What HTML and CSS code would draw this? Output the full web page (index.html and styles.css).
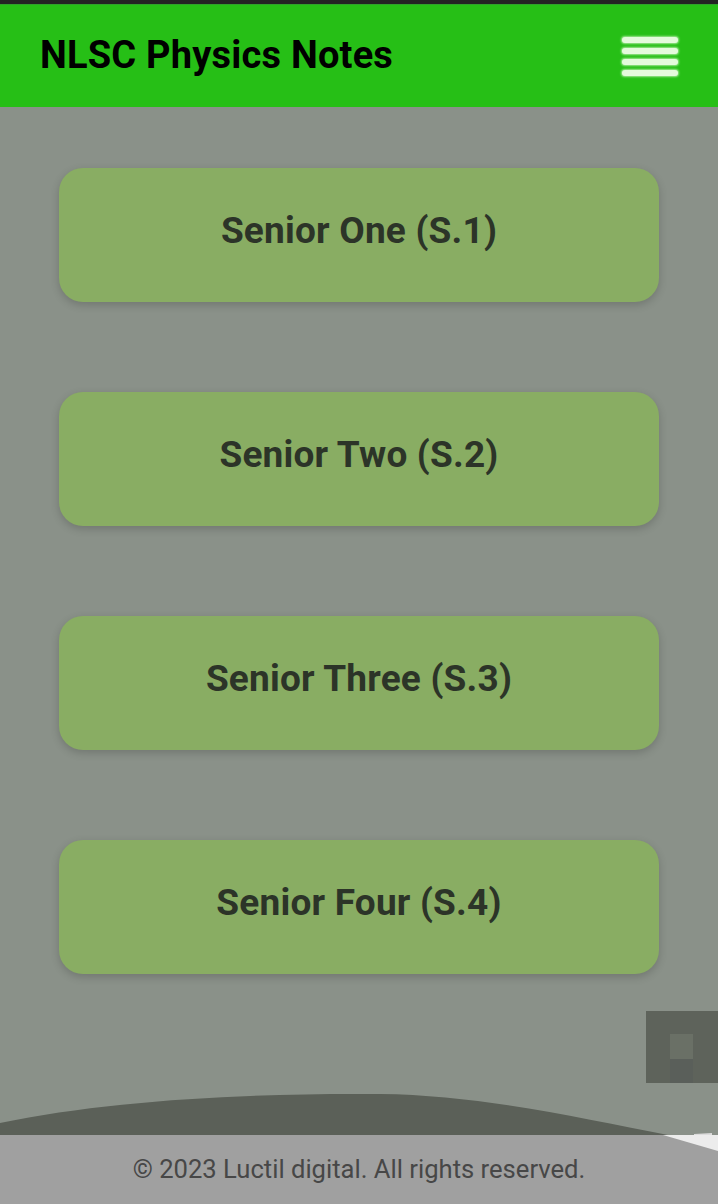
FILE: index.html
```html
<!DOCTYPE html>
<html lang="en">
<head>
<meta charset="utf-8">
<title>NLSC Physics Notes</title>
<link rel="stylesheet" href="styles.css">
</head>
<body>
<div class="page">
  <header class="topbar">
    <h1 class="brand">NLSC Physics Notes</h1>
    <button class="menu" aria-label="Menu">
      <span></span><span></span><span></span><span></span>
    </button>
  </header>
  <main class="levels">
    <a class="level" href="#">Senior One (S.1)</a>
    <a class="level" href="#">Senior Two (S.2)</a>
    <a class="level" href="#">Senior Three (S.3)</a>
    <a class="level" href="#">Senior Four (S.4)</a>
  </main>
  <div class="widget"><div class="widget-inner"></div><div class="widget-low"></div></div>
  <footer class="footer">
    <svg class="wave" width="718" height="72" viewBox="0 0 718 72" aria-hidden="true">
      <path d="M0,43 C110,20 250,13 380,14 C480,15 580,38 668,55 L0,55 Z" fill="#5b6058"/>
      <path d="M663,55 L718,55 L718,71 Z" fill="#ececec"/>
      <path d="M694,54 L712,53 L712,55 L694,55 Z" fill="#dcdcdc"/>
    </svg>
    <p class="copy">© 2023 Luctil digital. All rights reserved.</p>
  </footer>
</div>
</body>
</html>
```

FILE: styles.css
```css
* { box-sizing: border-box; }
html, body { margin: 0; padding: 0; }
body {
  background: #8a9189;
  font-family: Roboto, "Liberation Sans", Arial, sans-serif;
}
.page {
  position: relative;
  min-height: 1204px;
  display: flex;
  flex-direction: column;
  border-top: 4px solid #232323;
}
.topbar {
  height: 103px;
  background: #26bf16;
  display: flex;
  align-items: center;
  justify-content: space-between;
  padding: 0 40px 0 40px;
  border-top: 1px solid #2fa12a;
}
.brand {
  margin: 0;
  font-size: 38px;
  font-weight: 700;
  color: #000;
  letter-spacing: 0.2px;
  padding-bottom: 3px;
}
.menu {
  width: 56px;
  padding: 0;
  border: 0;
  background: transparent;
  display: flex;
  flex-direction: column;
  gap: 5px;
  margin-top: 0;
}
.menu span {
  display: block;
  height: 6px;
  border-radius: 3px;
  background: #e4fadc;
  box-shadow: 0 0 2px 1px rgba(200, 245, 190, 0.75);
}
.levels {
  flex: 1;
  display: flex;
  flex-direction: column;
  align-items: center;
  gap: 90px;
  padding-top: 61px;
}
.level {
  width: 600px;
  height: 134px;
  border-radius: 24px;
  background: #89ad63;
  box-shadow: 0 3px 8px rgba(0, 0, 0, 0.18);
  display: flex;
  align-items: center;
  justify-content: center;
  text-decoration: none;
  color: #2c3428;
  font-size: 37px;
  font-weight: 700;
  letter-spacing: 0.2px;
  padding-bottom: 10px;
}
.widget {
  position: absolute;
  right: 0;
  top: 1007px;
  width: 72px;
  height: 72px;
  background: #5e635b;
}
.widget-inner {
  position: absolute;
  left: 24px;
  top: 23px;
  width: 23px;
  height: 25px;
  background: #6a7066;
}
.widget-low {
  position: absolute;
  left: 24px;
  top: 48px;
  width: 23px;
  height: 24px;
  background: #5a5f5a;
}
.footer {
  position: relative;
  height: 69px;
  background: #a0a0a0;
  display: flex;
  align-items: center;
  justify-content: center;
}
.wave {
  position: absolute;
  left: 0;
  top: -55px;
  display: block;
}
.copy {
  position: relative;
  margin: 0;
  font-size: 25.6px;
  color: #474747;
  padding-bottom: 1px;
}
```
